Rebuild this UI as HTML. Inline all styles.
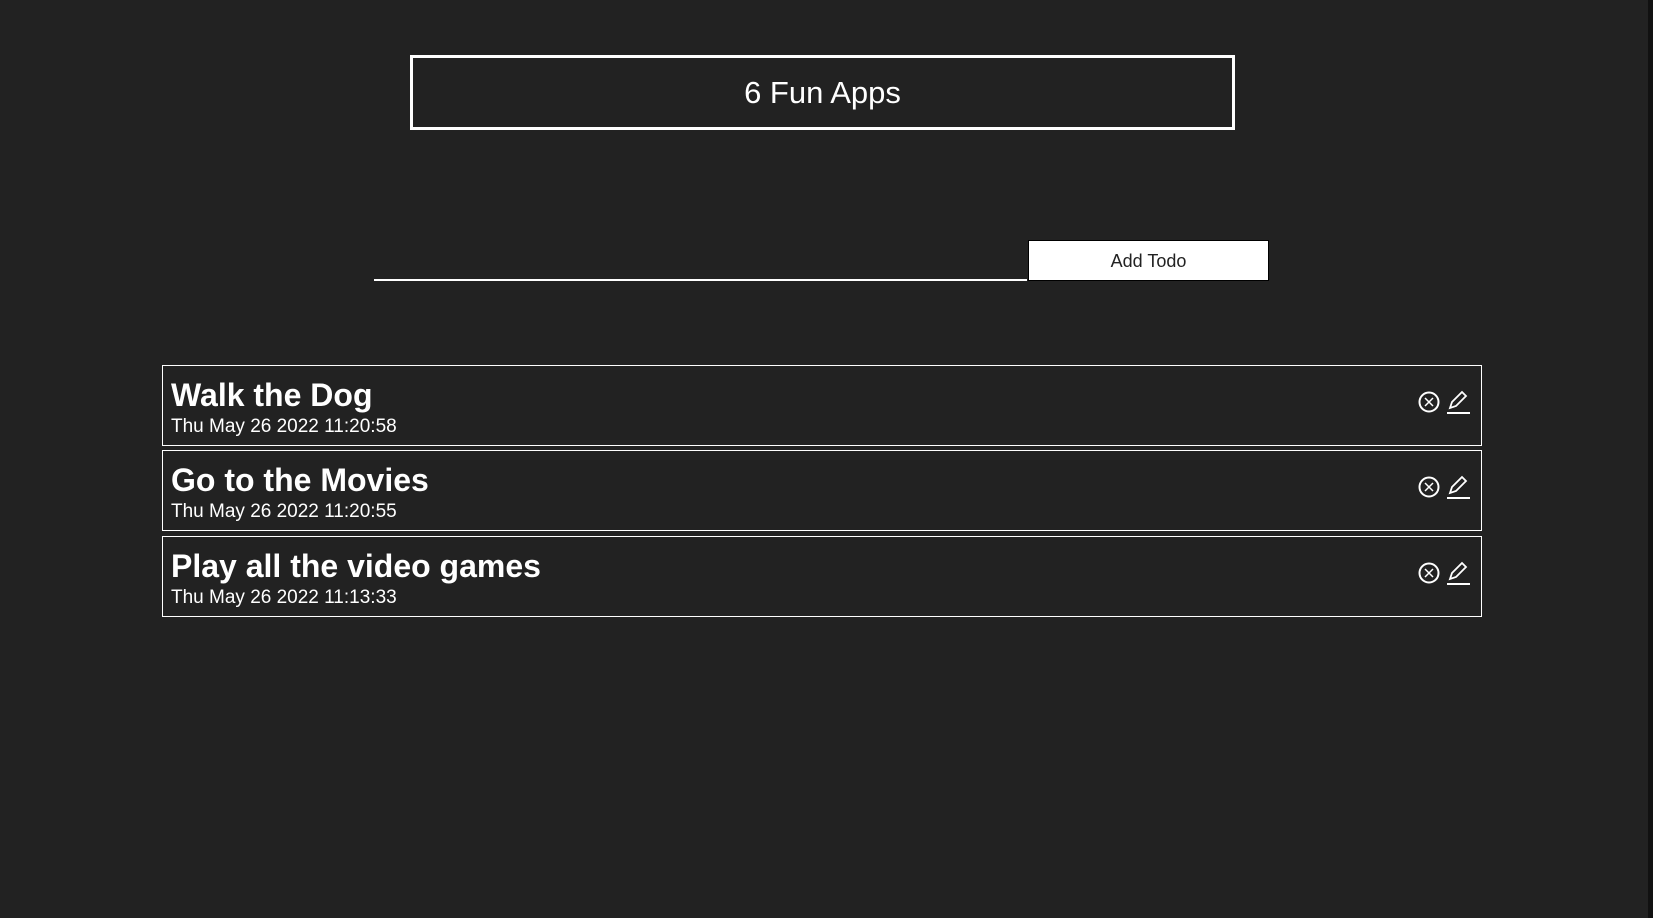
<!DOCTYPE html>
<html><head><meta charset="utf-8"><style>
html,body{margin:0;padding:0;background:#222;width:1653px;height:918px;overflow:hidden;font-family:"Liberation Sans",Arial,sans-serif;color:#fff;position:relative}
.hdr{position:absolute;left:410px;top:55px;width:819px;height:69px;border:3px solid #fff;text-align:center;line-height:69px;font-size:31px}
.inp{position:absolute;left:374px;top:279px;width:653px;height:2px;background:#fff}
.btn{position:absolute;left:1028px;top:240px;width:241px;height:41px;background:#fff;color:#222;font-size:18px;text-align:center;line-height:41px;border:1px solid #000;box-sizing:border-box}
.card{position:absolute;left:162px;width:1318px;height:79px;border:1px solid #fff}
.t{position:absolute;left:8px;top:11px;font-size:32px;font-weight:bold;line-height:36px;white-space:nowrap}
.d{position:absolute;left:8px;top:49px;font-size:19px;line-height:24px;white-space:nowrap}
.ic{position:absolute;left:1254px;top:23px}
.strip{position:absolute;left:1648px;top:0;width:5px;height:918px;background:#111}
</style></head><body>
<div class="hdr">6 Fun Apps</div>
<div class="inp"></div>
<div class="btn">Add Todo</div>
<div class="card" style="top:365px"><div class="t">Walk the Dog</div><div class="d">Thu May 26 2022 11:20:58</div>
<svg class="ic" width="60" height="30" viewBox="0 0 60 30"><circle cx="12" cy="13" r="9.5" fill="none" stroke="#fff" stroke-width="2"/><path d="M8 9l8 8M16 9l-8 8" stroke="#fff" stroke-width="1.5"/><path d="M33 19l2-6 10-10 4 4-10 10z" fill="none" stroke="#fff" stroke-width="1.8"/><path d="M30 24h23" stroke="#fff" stroke-width="2"/></svg></div>
<div class="card" style="top:450px"><div class="t">Go to the Movies</div><div class="d">Thu May 26 2022 11:20:55</div>
<svg class="ic" width="60" height="30" viewBox="0 0 60 30"><circle cx="12" cy="13" r="9.5" fill="none" stroke="#fff" stroke-width="2"/><path d="M8 9l8 8M16 9l-8 8" stroke="#fff" stroke-width="1.5"/><path d="M33 19l2-6 10-10 4 4-10 10z" fill="none" stroke="#fff" stroke-width="1.8"/><path d="M30 24h23" stroke="#fff" stroke-width="2"/></svg></div>
<div class="card" style="top:536px"><div class="t">Play all the video games</div><div class="d">Thu May 26 2022 11:13:33</div>
<svg class="ic" width="60" height="30" viewBox="0 0 60 30"><circle cx="12" cy="13" r="9.5" fill="none" stroke="#fff" stroke-width="2"/><path d="M8 9l8 8M16 9l-8 8" stroke="#fff" stroke-width="1.5"/><path d="M33 19l2-6 10-10 4 4-10 10z" fill="none" stroke="#fff" stroke-width="1.8"/><path d="M30 24h23" stroke="#fff" stroke-width="2"/></svg></div>
<div class="strip"></div>
</body></html>
